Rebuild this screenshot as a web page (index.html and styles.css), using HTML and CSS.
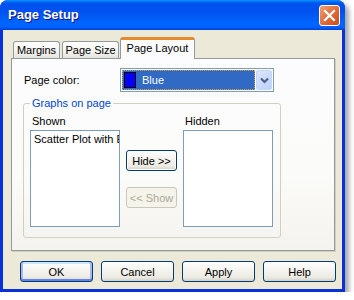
FILE: index.html
```html
<!DOCTYPE html>
<html>
<head>
<meta charset="utf-8">
<title>Page Setup</title>
<link rel="stylesheet" href="styles.css">
</head>
<body>
<div class="window">
	<div class="titlebar">
		<span class="title">Page Setup</span>
		<span class="close">
			<svg width="13" height="13" viewBox="0 0 13 13"><path d="M2 2 L11 11 M11 2 L2 11" stroke="#fff" stroke-width="2.2" stroke-linecap="square"/></svg>
		</span>
	</div>
	<div class="client">
		<div class="tabs">
			<div class="tab tab-margins">Margins</div>
			<div class="tab tab-size">Page Size</div>
			<div class="tab tab-layout selected">Page Layout</div>
		</div>
		<div class="panel">
			<div class="color-row">
				<label class="color-label">Page color:</label>
				<div class="combo">
					<div class="combo-value">
						<span class="swatch"></span>
						<span>Blue</span>
					</div>
					<div class="combo-btn">
						<svg width="9" height="7" viewBox="0 0 9 7"><path d="M1 1.5 L4.5 5 L8 1.5" fill="none" stroke="#4d6185" stroke-width="2.2"/></svg>
					</div>
				</div>
			</div>
			<fieldset class="graphs">
				<legend>Graphs on page</legend>
				<div class="graphs-row">
					<div class="col">
						<div class="col-label">Shown</div>
						<div class="listbox">
							<div class="item">Scatter Plot with E</div>
						</div>
					</div>
					<div class="move-btns">
						<button class="btn btn-focus">Hide &gt;&gt;</button>
						<button class="btn" disabled>&lt;&lt; Show</button>
					</div>
					<div class="col">
						<div class="col-label">Hidden</div>
						<div class="listbox"></div>
					</div>
				</div>
			</fieldset>
		</div>
		<div class="actions">
			<button class="btn btn-default">OK</button>
			<button class="btn">Cancel</button>
			<button class="btn">Apply</button>
			<button class="btn">Help</button>
		</div>
	</div>
</div>
</body>
</html>
```

FILE: styles.css
```css
*
{
	box-sizing: border-box;
}
body
{
	margin: 0px;
	padding: 0px;
	background: #fff;
	font-family: "Liberation Sans", Arial, sans-serif;
	font-size: 11px;
	color: #000;
}
.window{
	width: 345px;
	height: 292px;
	border-radius: 8px 8px 0 0;
	background: #0831d9;
	box-shadow: 4px 4px 5px rgba(0,0,0,0.35);
	display: flex;
	flex-direction: column;
	overflow: hidden;
}
.titlebar{
	height: 30px;
	flex: none;
	display: flex;
	align-items: center;
	justify-content: space-between;
	padding: 0 5px 0 8px;
	background: linear-gradient(#0997ff 0px, #0053ee 3px, #0050ee 10px, #0066ff 24px, #0062fa 27px, #0041d8 30px);
}
.title{
	color: #fff;
	font-weight: bold;
	font-size: 13px;
	text-shadow: 1px 1px #0f1089;
	padding-bottom: 1px;
}
.close{
	width: 21px;
	height: 21px;
	border: 1px solid #fff;
	border-radius: 3px;
	background: linear-gradient(135deg, #f0a070, #e0683a 55%, #cc4b1c);
	display: flex;
	align-items: center;
	justify-content: center;
}
.client{
	flex: 1;
	margin: 0 3px 3px 3px;
	background: #ece9d8;
	padding-top: 7px;
}
.tabs{
	display: flex;
	align-items: flex-end;
	height: 21px;
	margin-left: 10px;
}
.tab{
	height: 17px;
	border: 1px solid #919b9c;
	border-bottom: none;
	border-radius: 3px 3px 0 0;
	background: linear-gradient(#fff, #f3f3ef 60%, #e4e3dc);
	text-align: center;
	line-height: 16px;
}
.tab-margins{
	width: 47px;
	margin-right: 2px;
}
.tab-size{
	width: 57px;
}
.tab.selected{
	width: 75px;
	height: 22px;
	margin-left: 1px;
	margin-bottom: -1px;
	position: relative;
	z-index: 1;
	background: #fcfcfe;
	border-top: 3px solid #e68b2c;
	line-height: 17px;
}
.panel{
	height: 193px;
	margin: 0 7px 0 8px;
	border: 1px solid #919b9c;
	background: linear-gradient(#fcfcfe, #fbfbf9 60%, #f4f3ee);
	box-shadow: 1px 1px 0 #d0cebf;
	padding: 9px 0 0 12px;
}
.color-row{
	display: flex;
	align-items: center;
}
.color-label{
	width: 96px;
}
.combo{
	width: 154px;
	height: 24px;
	border: 1px solid #7f9db9;
	background: #fff;
	display: flex;
	padding: 1px;
}
.combo-value{
	flex: 1;
	background: #316ac5;
	color: #fff;
	border: 1px dotted #d8a040;
	display: flex;
	align-items: center;
	gap: 6px;
	padding-left: 1px;
}
.swatch{
	width: 12px;
	height: 16px;
	background: #0000ff;
	border: 1px solid #000;
}
.combo-btn{
	width: 16px;
	margin-left: 1px;
	background: linear-gradient(135deg, #dce6fd, #bcd0fa);
	border: 1px solid #c5d5f8;
	border-radius: 2px;
	display: flex;
	align-items: center;
	justify-content: center;
	padding-top: 1px;
}
.graphs{
	width: 258px;
	height: 141px;
	margin: 5px 0 0 -1px;
	padding: 5px 0 0 6px;
	border: 1px solid #d0d0bf;
	border-radius: 3px;
	min-width: 0;
}
.graphs legend{
	color: #0046d5;
	line-height: 13px;
	padding: 0 2px;
	margin-left: 0;
}
.graphs-row{
	display: flex;
}
.col-label{
	line-height: 13px;
	margin: 0 0 2px 2px;
}
.listbox{
	width: 90px;
	height: 97px;
	border: 1px solid #7f9db9;
	background: #fff;
	overflow: hidden;
	padding: 2px 0 0 3px;
}
.item{
	white-space: nowrap;
	line-height: 13px;
}
.move-btns{
	display: flex;
	flex-direction: column;
	gap: 16px;
	padding-top: 35px;
	margin: 0 6px 0 6px;
}
.btn{
	font-family: "Liberation Sans", Arial, sans-serif;
	font-size: 11px;
	color: #000;
	height: 21px;
	width: 51px;
	padding: 0;
	border: 1px solid #003c74;
	border-radius: 3px;
	background: linear-gradient(#fff, #f5f4ef 40%, #ecebe4 80%, #d6d0c5);
}
.btn:disabled{
	color: #aca899;
	border-color: #c9c7ba;
	background: #f5f4ea;
}
.btn-focus{
	box-shadow: inset 0 0 0 1px #fff;
}
.actions{
	display: flex;
	gap: 8px;
	margin: 10px 0 0 17px;
}
.actions .btn{
	width: 73px;
}
.btn-default{
	box-shadow: inset 0 -2px 0 #6982ee, inset 2px 0 0 #a6b9f0, inset -2px 0 0 #a6b9f0, inset 0 2px 0 #cee7ff;
}
```
